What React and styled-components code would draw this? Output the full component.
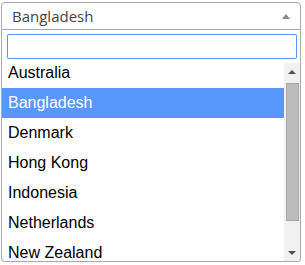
import React, { useState } from "react";
import styled, { createGlobalStyle } from "styled-components";

const GlobalStyle = createGlobalStyle`
  html, body {
    margin: 0;
    padding: 0;
    background: #ffffff;
  }
`;

const countries = [
  "Australia",
  "Bangladesh",
  "Denmark",
  "Hong Kong",
  "Indonesia",
  "Netherlands",
  "New Zealand",
  "Norway",
  "Singapore",
  "Sweden",
];

export default function App() {
  const [selected] = useState("Bangladesh");

  return (
    <>
      <GlobalStyle />
      <Page>
        <Container>
          <Selection>
            <SelectedText>{selected}</SelectedText>
            <Arrow />
          </Selection>
          <Dropdown>
            <SearchWrap>
              <SearchInput type="text" />
            </SearchWrap>
            <ResultsArea>
              <Viewport>
                <Results>
                  {countries.map((c) => (
                    <Option key={c} $active={c === selected}>
                      {c}
                    </Option>
                  ))}
                </Results>
              </Viewport>
              <ScrollBar>
                <ScrollButton>
                  <Triangle $dir="up" />
                </ScrollButton>
                <Track>
                  <Thumb />
                </Track>
                <ScrollButton>
                  <Triangle $dir="down" />
                </ScrollButton>
              </ScrollBar>
            </ResultsArea>
          </Dropdown>
        </Container>
      </Page>
    </>
  );
}

const Page = styled.div`
  padding: 2px 0 0 1px;
`;

const Container = styled.div`
  width: 300px;
  display: flex;
  flex-direction: column;
`;

const Selection = styled.div`
  height: 26px;
  border: 1px solid #aaaaaa;
  border-radius: 4px 4px 0 0;
  display: flex;
  align-items: center;
  justify-content: space-between;
  padding: 0 8px 0 10px;
  box-sizing: content-box;
`;

const SelectedText = styled.span`
  font-family: "Open Sans", "Noto Sans", sans-serif;
  font-size: 15px;
  color: #444444;
`;

const Arrow = styled.span`
  width: 0;
  height: 0;
  border-left: 4px solid transparent;
  border-right: 4px solid transparent;
  border-bottom: 5px solid #888888;
  margin-right: 2px;
`;

const Dropdown = styled.div`
  border: 1px solid #aaaaaa;
  border-top: none;
  border-radius: 0 0 4px 4px;
  overflow: hidden;
`;

const SearchWrap = styled.div`
  padding: 4px 3px 4px 5px;
`;

const SearchInput = styled.input`
  display: block;
  width: 100%;
  height: 25px;
  box-sizing: border-box;
  border: 1px solid #5897fb;
  border-radius: 2px;
  box-shadow: 0 0 1px #9ec0f7;
  outline: none;
  padding: 2px 4px;
  font-family: "Liberation Sans", Arial, sans-serif;
  font-size: 16px;
`;

const ResultsArea = styled.div`
  display: flex;
  height: 198px;
`;

const Viewport = styled.div`
  flex: 1;
  overflow: hidden;
`;

const Results = styled.ul`
  list-style: none;
  margin: -5px 0 0 0;
  padding: 0;
`;

const Option = styled.li`
  height: 30px;
  line-height: 30px;
  padding: 0 6px;
  font-family: "Liberation Sans", Arial, sans-serif;
  font-size: 16px;
  color: ${(p) => (p.$active ? "#ffffff" : "#000000")};
  background: ${(p) => (p.$active ? "#5897fb" : "transparent")};
`;

const ScrollBar = styled.div`
  width: 16px;
  background: #f1f1f1;
  display: flex;
  flex-direction: column;
`;

const ScrollButton = styled.div`
  height: 17px;
  display: flex;
  align-items: center;
  justify-content: center;
`;

const Triangle = styled.span`
  width: 0;
  height: 0;
  border-left: 4px solid transparent;
  border-right: 4px solid transparent;
  ${(p) =>
    p.$dir === "up"
      ? "border-bottom: 4px solid #505050;"
      : "border-top: 4px solid #505050;"}
`;

const Track = styled.div`
  flex: 1;
  padding: 3px 1px 0 2px;
`;

const Thumb = styled.div`
  height: 138px;
  box-sizing: border-box;
  background: #bcbcbc;
  border: 1px solid #a8a8a8;
`;
